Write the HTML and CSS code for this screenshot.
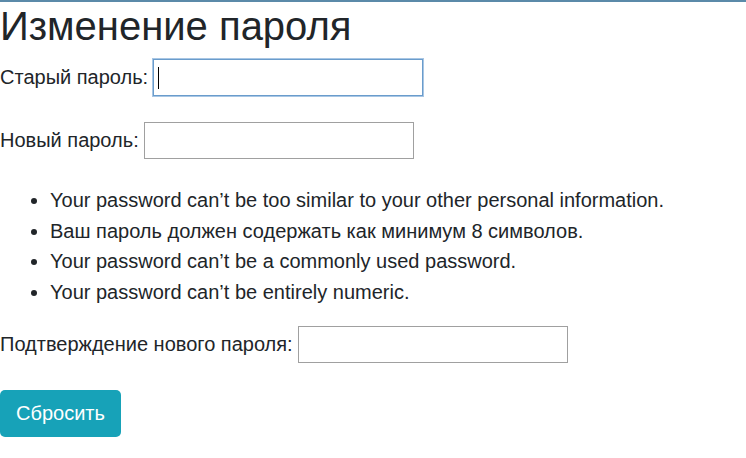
FILE: index.html
```html
<!DOCTYPE html>
<html lang="ru">
<head>
<meta charset="utf-8">
<title>Изменение пароля</title>
<link rel="stylesheet" href="styles.css">
</head>
<body>
<div class="topline"></div>
<main class="content">
  <h1 class="title">Изменение пароля</h1>
  <form class="form">
    <p class="field"><label>Старый пароль:</label><span class="input focused"><span class="caret"></span></span></p>
    <p class="field"><label>Новый пароль:</label><span class="input"></span></p>
    <ul class="help">
      <li>Your password can’t be too similar to your other personal information.</li>
      <li>Ваш пароль должен содержать как минимум 8 символов.</li>
      <li>Your password can’t be a commonly used password.</li>
      <li>Your password can’t be entirely numeric.</li>
    </ul>
    <p class="field"><label>Подтверждение нового пароля:</label><span class="input"></span></p>
    <button class="btn" type="button">Сбросить</button>
  </form>
</main>
</body>
</html>
```
FILE: styles.css
```css
html, body { margin: 0; padding: 0; background: #fff; }
body {
  font-family: "Liberation Sans", Arial, sans-serif;
  color: #212529;
  font-size: 20px;
  line-height: 1.5333;
}
.topline { height: 2px; background: #5b8aa9; }
.content { padding: 0; }
.title {
  font-size: 40px;
  font-weight: 400;
  line-height: 1.2;
  margin: 0 0 9px 0;
}
.form { margin: 0; }
.field {
  display: flex;
  align-items: center;
  gap: 5px;
  margin: 0 0 26px 0;
}
.input {
  display: inline-flex;
  align-items: center;
  box-sizing: border-box;
  width: 270px;
  height: 37px;
  border: 1px solid #a0a0a0;
  background: #fff;
  padding-left: 4px;
}
.input.focused {
  border: 1px solid #6a9ccc;
  box-shadow: 0 0 0 1px #a8c6e4;
}
.caret { width: 1px; height: 22px; background: #000; }
.help {
  margin: 0 0 18px 0;
  padding-left: 50px;
}
.btn {
  font-family: inherit;
  font-size: 20px;
  color: #fff;
  background: #17a2b8;
  border: 0;
  border-radius: 5px;
  width: 121px;
  height: 47px;
  padding: 0;
  margin-top: 1px;
}
```
